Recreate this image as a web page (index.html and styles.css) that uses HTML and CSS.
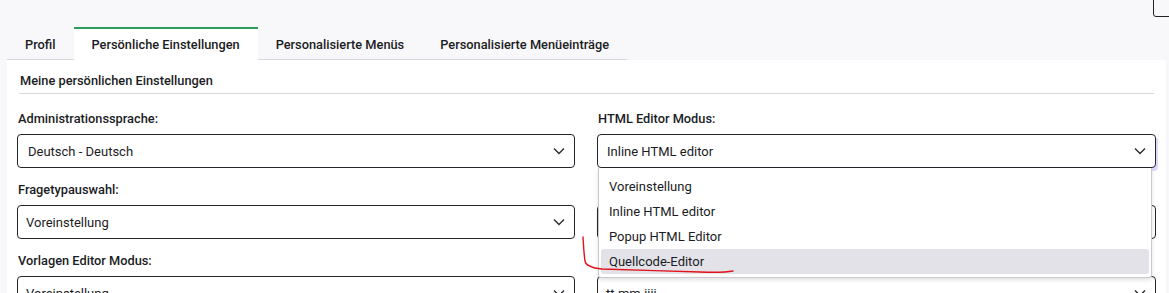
FILE: index.html
```html
<!DOCTYPE html>
<html lang="de">
<head>
<meta charset="utf-8">
<title>Persönliche Einstellungen</title>
<link rel="stylesheet" href="styles.css">
</head>
<body>
<div class="corner-box"></div>
<div class="page">
  <ul class="tabs">
    <li class="tab">Profil</li>
    <li class="tab active">Persönliche Einstellungen</li>
    <li class="tab">Personalisierte Menüs</li>
    <li class="tab">Personalisierte Menüeinträge</li>
  </ul>
  <div class="panel">
    <h2 class="heading">Meine persönlichen Einstellungen</h2>
    <div class="grid">
      <div class="field">
        <label class="label">Administrationssprache:</label>
        <div class="select wide-pad"><span>Deutsch - Deutsch</span><svg class="chev" viewBox="0 0 12 8"><path d="M1 1.5 6 6.5 11 1.5"/></svg></div>
      </div>
      <div class="field">
        <label class="label">HTML Editor Modus:</label>
        <div class="select-wrap">
          <div class="select focused"><span>Inline HTML editor</span><svg class="chev" viewBox="0 0 12 8"><path d="M1 1.5 6 6.5 11 1.5"/></svg></div>
          <ul class="dropdown">
            <li class="option">Voreinstellung</li>
            <li class="option">Inline HTML editor</li>
            <li class="option">Popup HTML Editor</li>
            <li class="option hover">Quellcode-Editor</li>
          </ul>
        </div>
      </div>
      <div class="field">
        <label class="label">Fragetypauswahl:</label>
        <div class="select"><span>Voreinstellung</span><svg class="chev" viewBox="0 0 12 8"><path d="M1 1.5 6 6.5 11 1.5"/></svg></div>
      </div>
      <div class="field">
        <label class="label">&nbsp;</label>
        <div class="select"><span></span><svg class="chev" viewBox="0 0 12 8"><path d="M1 1.5 6 6.5 11 1.5"/></svg></div>
      </div>
      <div class="field">
        <label class="label">Vorlagen Editor Modus:</label>
        <div class="select"><span>Voreinstellung</span><svg class="chev" viewBox="0 0 12 8"><path d="M1 1.5 6 6.5 11 1.5"/></svg></div>
      </div>
      <div class="field">
        <label class="label">&nbsp;</label>
        <div class="select"><span>tt.mm.jjjj</span><svg class="chev" viewBox="0 0 12 8"><path d="M1 1.5 6 6.5 11 1.5"/></svg></div>
      </div>
    </div>
  </div>
</div>
<svg class="annotation" width="1169" height="293" viewBox="0 0 1169 293">
  <path d="M583 237 C583.5 245 584 255 585 261 C586 266 592 268 602 269 C630 270 670 271 700 272 C715 272.5 725 272.5 733 271"/>
</svg>
</body>
</html>
```

FILE: styles.css
```css
* { box-sizing: border-box; }
html, body {
  margin: 0;
  padding: 0;
  background: #f8f8fa;
  font-family: Roboto, "Noto Sans", "Liberation Sans", sans-serif;
  color: #1b1c24;
  height: 293px;
  overflow: hidden;
}
.page {
  padding: 27px 3px 0 7px;
}
.corner-box {
  position: absolute;
  top: -4px;
  left: 1153px;
  width: 30px;
  height: 21px;
  border: 1px solid #222;
  border-radius: 0 0 0 3px;
  background: #f8f8fa;
}
.tabs {
  list-style: none;
  margin: 0;
  padding: 0;
  display: inline-flex;
  border-bottom: 1px solid #d6d6dc;
  vertical-align: top;
}
.tab {
  height: 33px;
  padding: 0 18px;
  border-top: 2px solid transparent;
  display: flex;
  align-items: center;
  font-size: 12.8px;
  font-weight: 500;
  margin-bottom: -1px;
}
.tab.active {
  background: #fff;
  border-top-color: #2e9d5c;
}
.panel {
  background: #fff;
  padding: 9px 10px 0 10px;
  height: 240px;
}
.heading {
  margin: 0 2px;
  font-size: 12.8px;
  font-weight: 500;
  height: 25px;
  line-height: 24px;
  padding-left: 1px;
  border-bottom: 1px solid #d6d6dc;
}
.grid {
  display: grid;
  grid-template-columns: 558px 559px;
  column-gap: 22px;
  row-gap: 12px;
  padding-top: 15px;
}
.field {
  display: flex;
  flex-direction: column;
  gap: 5px;
}
.label {
  font-size: 12.8px;
  font-weight: 500;
  line-height: 20px;
  padding-left: 1px;
}
.select-wrap {
  position: relative;
}
.select {
  height: 34px;
  border: 1px solid #25262c;
  border-radius: 4px;
  display: flex;
  align-items: center;
  justify-content: space-between;
  padding: 0 9px 0 8px;
  font-size: 13px;
  background: #fff;
}
.select.wide-pad { padding-left: 10px; }
.select.focused {
  padding-left: 9px;
  box-shadow: 2px 3px 0 0 #ddd8fd;
}
.chev {
  width: 12px;
  height: 8px;
  fill: none;
  stroke: #2b2c33;
  stroke-width: 1.4;
}
.dropdown {
  position: absolute;
  left: 1px;
  top: 34px;
  width: 554px;
  list-style: none;
  margin: 0;
  padding: 6px 2px 3px;
  background: #fff;
  border: 1px solid #c9c9cf;
  border-top: none;
  border-radius: 0 0 3px 3px;
  box-shadow: 0 2px 4px rgba(0,0,0,0.12);
  z-index: 5;
}
.option {
  height: 25px;
  line-height: 25px;
  padding-left: 8px;
  font-size: 13px;
  border-radius: 3px;
}
.option.hover {
  background: #e2e2e8;
}
.annotation {
  position: absolute;
  left: 0;
  top: 0;
  pointer-events: none;
  z-index: 10;
}
.annotation path {
  fill: none;
  stroke: #e3121b;
  stroke-width: 1.4;
  stroke-linecap: round;
}
```
